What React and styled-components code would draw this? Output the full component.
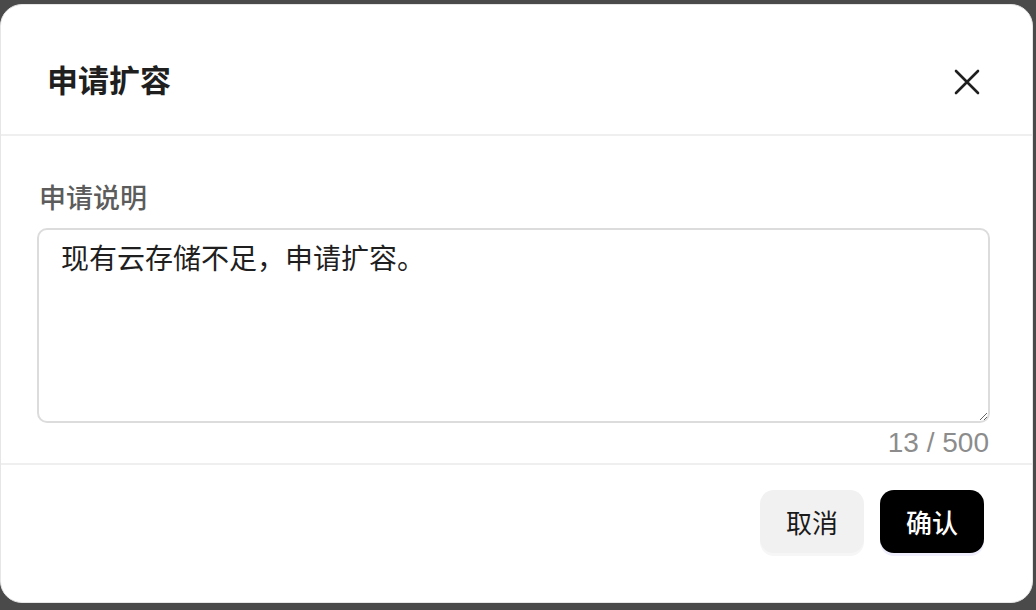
import React, { useState } from 'react';
import styled, { createGlobalStyle } from 'styled-components';

const GlobalStyle = createGlobalStyle`
  html, body {
    margin: 0;
    padding: 0;
    background: #4a4a4a;
    font-family: "Liberation Sans", "Noto Sans CJK SC", sans-serif;
  }
  * {
    box-sizing: border-box;
  }
`;

const Backdrop = styled.div`
  width: 1036px;
  height: 610px;
  padding: 4px 3px 7px 0;
  display: flex;
`;

const Dialog = styled.div`
  flex: 1;
  display: flex;
  flex-direction: column;
  background: #fff;
  border: 1px solid #e6e6e6;
  border-radius: 22px;
  overflow: hidden;
`;

const Header = styled.div`
  display: flex;
  align-items: center;
  justify-content: space-between;
  padding: 59px 51px 34px 46px;
  border-bottom: 2px solid #efefef;
  h2 {
    margin: 0;
    font-size: 31px;
    line-height: 36px;
    font-weight: 700;
    color: #1f1f1f;
  }
`;

const CloseBtn = styled.button`
  width: 28px;
  height: 28px;
  padding: 0;
  border: none;
  background: transparent;
  display: flex;
  align-items: center;
  justify-content: center;
  cursor: pointer;
`;

const Body = styled.div`
  padding: 45px 42px 3px 36px;
  display: flex;
  flex-direction: column;
`;

const Label = styled.label`
  font-size: 27px;
  line-height: 36px;
  font-weight: 500;
  color: #5c5c5c;
  padding-left: 2px;
  margin-bottom: 11px;
`;

const TextArea = styled.textarea`
  width: 100%;
  height: 195px;
  padding: 10px 22px;
  border: 2px solid #dcdcdc;
  border-radius: 10px;
  font-family: "Liberation Sans", "Noto Sans CJK SC", sans-serif;
  font-size: 28px;
  line-height: 40px;
  color: #1f1f1f;
  resize: vertical;
  outline: none;
`;

const Counter = styled.div`
  align-self: flex-end;
  margin-top: 3px;
  padding-right: 1px;
  font-size: 28px;
  line-height: 34px;
  color: #8c8c8c;
`;

const Footer = styled.div`
  border-top: 2px solid #efefef;
  display: flex;
  justify-content: flex-end;
  gap: 16px;
  padding: 25px 48px 0 0;
`;

const Button = styled.button`
  width: 104px;
  height: 63px;
  border: none;
  border-radius: 14px;
  font-family: "Liberation Sans", "Noto Sans CJK SC", sans-serif;
  font-size: 26px;
  font-weight: ${p => (p.$primary ? 500 : 400)};
  background: ${p => (p.$primary ? '#000' : '#f1f1f1')};
  color: ${p => (p.$primary ? '#fff' : '#1a1a1a')};
  box-shadow: 0 3px 0 ${p => (p.$primary ? '#eeeefc' : '#f6f6f6')};
  cursor: pointer;
`;

const App = () => {
  const [text, setText] = useState('现有云存储不足，申请扩容。');

  return (
    <>
      <GlobalStyle />
      <Backdrop>
        <Dialog>
          <Header>
            <h2>申请扩容</h2>
            <CloseBtn aria-label="关闭">
              <svg width="26" height="26" viewBox="0 0 26 26" fill="none">
                <path d="M2 2L24 24M24 2L2 24" stroke="#1f1f1f" strokeWidth="2.6" strokeLinecap="round" />
              </svg>
            </CloseBtn>
          </Header>
          <Body>
            <Label>申请说明</Label>
            <TextArea value={text} maxLength={500} onChange={e => setText(e.target.value)} />
            <Counter>{text.length} / 500</Counter>
          </Body>
          <Footer>
            <Button>取消</Button>
            <Button $primary>确认</Button>
          </Footer>
        </Dialog>
      </Backdrop>
    </>
  );
};

export default App;
